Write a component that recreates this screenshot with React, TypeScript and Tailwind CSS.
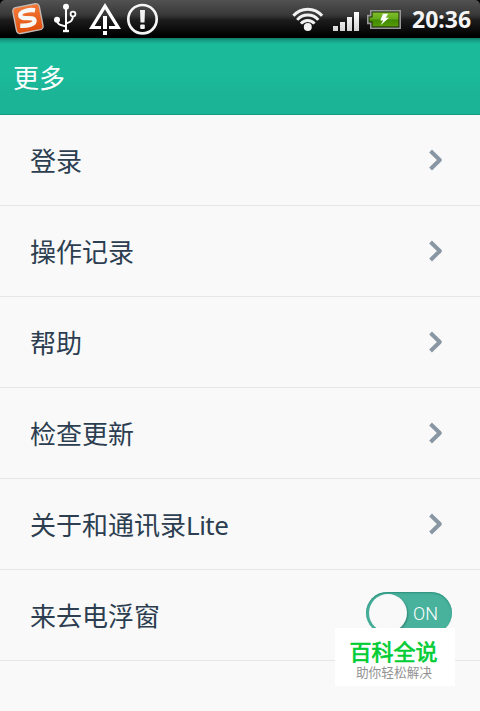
import React from "react";

const sans = "font-['Noto_Sans','Noto_Sans_CJK_SC',sans-serif]";

function SogouIcon() {
  return (
    <svg className="ml-2.5 h-[38px] w-9 shrink-0" viewBox="10 0 36 38">
      <defs>
        <linearGradient id="orange" x1="0" y1="0" x2="0" y2="1">
          <stop offset="0" stopColor="#f47a38" />
          <stop offset="1" stopColor="#e04e0c" />
        </linearGradient>
      </defs>
      <g transform="rotate(-11 28 18.5)">
        <rect x="14.4" y="5.4" width="27" height="26.4" rx="3.5" fill="url(#orange)" stroke="#c4b8b2" strokeWidth="1.4" />
        <path
          d="M36.5 11.8 C31 9.8 21 9.8 21 14.2 C21 19.2 34 16.8 34 21.6 C34 26 25 25.8 19 24"
          fill="none"
          stroke="#f7f7f5"
          strokeWidth="4.4"
        />
      </g>
    </svg>
  );
}

function UsbIcon() {
  return (
    <svg className="ml-1.5 h-[38px] w-[26px] shrink-0" viewBox="52 0 26 38" fill="none" stroke="#fff" strokeWidth="2">
      <path d="M66 7 V30 M57 20 C57 24.5 60 25 66 26.5 M66 23.5 C70 22 73 21.5 73 15" />
      <circle cx="66" cy="6.8" r="3" fill="#fff" stroke="none" />
      <circle cx="57" cy="19.8" r="3" fill="#fff" stroke="none" />
      <circle cx="73" cy="14" r="2.4" fill="#222" strokeWidth="1.8" />
      <rect x="63" y="29.8" width="6" height="2.4" fill="#fff" stroke="none" />
    </svg>
  );
}

function WarningIcon() {
  return (
    <svg className="ml-2.5 h-[38px] w-[34px] shrink-0" viewBox="88 0 34 38">
      <path
        fillRule="evenodd"
        d="M105 3 L121 29 H109 V26 H115.4 L105 9.2 L94.6 26 H101 V29 H89 Z"
        fill="#fff"
      />
      <rect x="103" y="16" width="4" height="13" fill="#fff" />
      <rect x="103" y="31" width="4" height="4" fill="#fff" />
    </svg>
  );
}

function AlertIcon() {
  return (
    <svg className="ml-1 h-[38px] w-[33px] shrink-0" viewBox="126 0 33 38">
      <circle cx="142.5" cy="19.2" r="14.2" fill="none" stroke="#f5f5f5" strokeWidth="2.7" />
      <path d="M140 10 H145 L144.5 22.5 H140.5 Z" fill="#f2f2f2" />
      <rect x="140.2" y="24.6" width="4.6" height="4.4" rx="1" fill="#f2f2f2" />
    </svg>
  );
}

function WifiIcon() {
  return (
    <svg className="ml-auto h-[38px] w-8 shrink-0" viewBox="292 0 32 38" fill="none" stroke="#f2f2f2" strokeWidth="3">
      <path d="M293.4 15.8 A19 19 0 0 1 322.1 15.8" />
      <path d="M297.2 19.9 A13.8 13.8 0 0 1 318.3 19.9" />
      <path d="M301 23.6 A8.8 8.8 0 0 1 314.5 23.6" />
      <circle cx="307.8" cy="27" r="4" fill="#f2f2f2" stroke="none" />
    </svg>
  );
}

function SignalIcon() {
  return (
    <svg className="ml-2 h-[38px] w-7 shrink-0" viewBox="332 0 28 38">
      <defs>
        <linearGradient id="bars" x1="0" y1="12" x2="0" y2="31" gradientUnits="userSpaceOnUse">
          <stop offset="0" stopColor="#fff" />
          <stop offset="1" stopColor="#d2d2d2" />
        </linearGradient>
      </defs>
      <path d="M333 26h5v5h-5z M340 22h5v9h-5z M347 17h5v14h-5z M354 12h5v19h-5z" fill="url(#bars)" />
    </svg>
  );
}

function BatteryIcon() {
  return (
    <svg className="ml-[7px] h-[38px] w-[34px] shrink-0" viewBox="367 0 34 38">
      <defs>
        <linearGradient id="charge" x1="0" y1="0" x2="0" y2="1">
          <stop offset="0" stopColor="#80be2a" />
          <stop offset="0.48" stopColor="#64a91a" />
          <stop offset="0.52" stopColor="#418900" />
          <stop offset="1" stopColor="#559c08" />
        </linearGradient>
      </defs>
      <path d="M370.8 10.8 H400.2 V28.2 H370.8 V23.4 H367.8 V15.6 H370.8 Z" fill="#172606" stroke="#989898" strokeWidth="1.6" />
      <path d="M372.5 12.5 H398.5 V26.5 H372.5 V21.5 H369.5 V17.5 H372.5 Z" fill="url(#charge)" />
      <path d="M383 13.8 H388.2 L385.7 17.8 H389 L380.5 25.2 L383.1 20.6 H380.3 Z" fill="#fff" />
    </svg>
  );
}

function StatusBar() {
  return (
    <div className="h-[38px] bg-black">
      <div className="flex h-[38px] items-center rounded-t-[5px] bg-[linear-gradient(to_bottom,#525252_0px,#383838_15px,#282828_18px,#1c1c1c_20px,#000_36px)]">
        <SogouIcon />
        <UsbIcon />
        <WarningIcon />
        <AlertIcon />
        <WifiIcon />
        <SignalIcon />
        <BatteryIcon />
        <span className="ml-[11px] w-[68px] shrink-0 whitespace-nowrap text-[23px] leading-[38px] font-bold text-[#f4f4f4]">
          20:36
        </span>
      </div>
    </div>
  );
}

function Chevron() {
  return (
    <svg className="mr-[37px] h-6 w-4" viewBox="0 0 16 24">
      <path
        d="M5 4.4 L12.8 12 L5 19.6"
        fill="none"
        stroke="#8996a3"
        strokeWidth="4"
        strokeLinecap="square"
        strokeLinejoin="round"
      />
    </svg>
  );
}

function Toggle() {
  return (
    <div className="relative top-[-2px] mr-7 flex h-[42px] w-[86px] items-center rounded-full bg-[#48b29d] pl-[3px] shadow-[inset_0_1px_2px_#2b8c79]">
      <div className="size-[38px] rounded-full bg-[#f9f9f9] shadow-[1px_1px_2px_#2f8675]" />
      <span className="ml-1.5 pt-px font-[Roboto,sans-serif] text-[18px] leading-none font-light text-white">ON</span>
    </div>
  );
}

const items = ["登录", "操作记录", "帮助", "检查更新", "关于和通讯录Lite"];

function Row({ label, children }: { label: string; children: React.ReactNode }) {
  const [, chinese, latin] = label.match(/^(\P{ASCII}+)(.*)$/u) ?? ["", label, ""];
  return (
    <li className="flex h-[91px] items-center justify-between border-b border-[#e6e6e6] pl-[30px]">
      <span className="pt-0.5 text-[26px] leading-[40px] text-[#2c3e50]">
        {chinese}
        {latin && <span className="tracking-[-0.5px]">{latin}</span>}
      </span>
      {children}
    </li>
  );
}

export default function App() {
  return (
    <main className={`relative h-[711px] w-[480px] overflow-hidden bg-[#f9f9f9] ${sans}`}>
      <StatusBar />
      <header className="flex h-[77px] items-center border-b border-[#159a82] bg-[linear-gradient(to_bottom,#107562_0px,#169b83_2px,#1aba9b_6px,#1aba9b_40px,#1bb496_53px,#1bb496_100%)] pl-[13px]">
        <h1 className="pt-[3px] text-[26px] leading-[40px] text-white">更多</h1>
      </header>
      <ul>
        {items.map((label) => (
          <Row key={label} label={label}>
            <Chevron />
          </Row>
        ))}
        <Row label="来去电浮窗">
          <Toggle />
        </Row>
      </ul>
      <aside className="absolute top-[628px] left-[335px] flex h-[58px] w-[120px] flex-col items-center bg-white pt-[13px]">
        <span className="mr-[3px] text-[22px] leading-[20px] font-normal text-[#00cc33] [-webkit-text-stroke:0.7px_#00cc33]">
          百科全说
        </span>
        <span className="mt-[3px] mr-[2px] text-[12.7px] leading-[17px] text-[#929292]">助你轻松解决</span>
      </aside>
    </main>
  );
}
